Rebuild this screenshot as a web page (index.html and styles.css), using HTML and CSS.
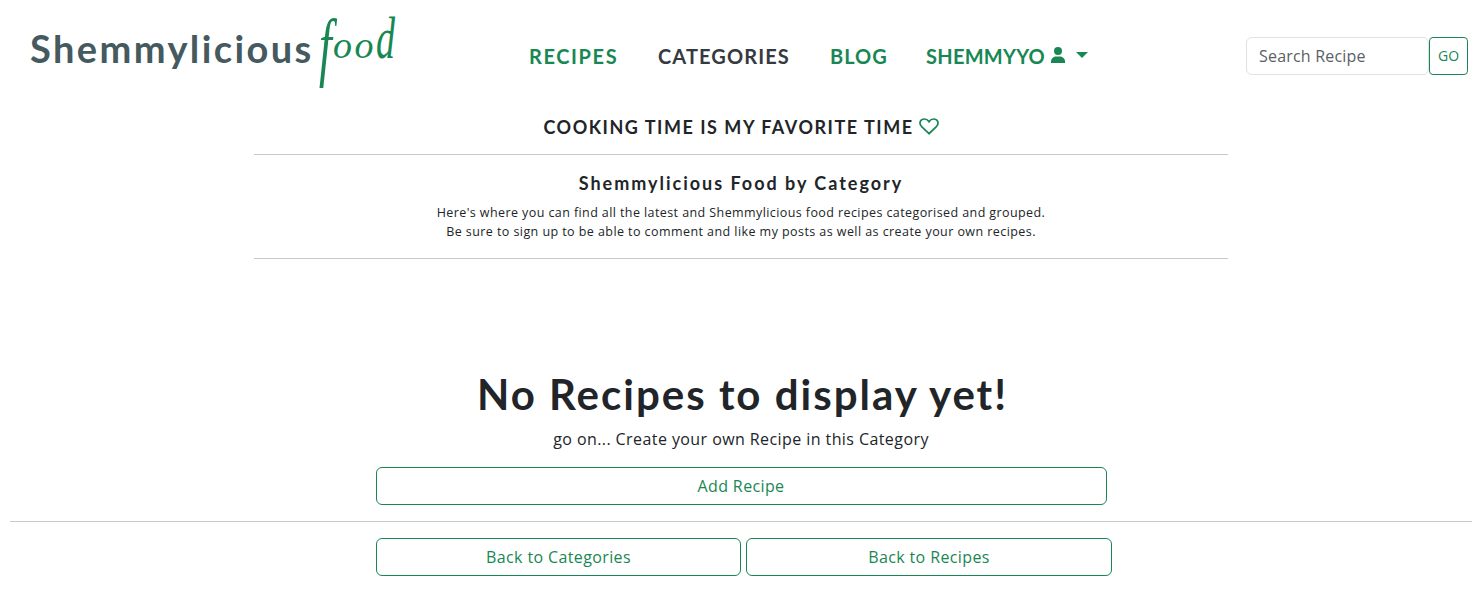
FILE: index.html
```html
<!DOCTYPE html>
<html lang="en">
<head>
<meta charset="utf-8">
<title>Shemmylicious Food</title>
<link rel="stylesheet" href="styles.css">
</head>
<body>
<header class="navbar">
  <a class="brand"><span class="brand-name">Shemmylicious</span><span class="brand-script"><span class="tall-f">f</span><span>oo</span><span class="tall-d">d</span></span></a>
  <nav class="links">
    <a class="recipes">RECIPES</a>
    <a class="categories">CATEGORIES</a>
    <a class="blog">BLOG</a>
    <a class="account"><span class="user">SHEMMYYO</span><svg class="person" viewBox="0 0 14 16"><circle cx="7" cy="4" r="4"/><path d="M0 16v-1.5C0 11.500 2.500 9.500 5.500 9.500h3c3 0 5.500 2 5.500 5V16z"/></svg><i class="caret"></i></a>
  </nav>
  <form class="search"><input type="text" placeholder="Search Recipe"><button type="button">GO</button></form>
</header>
<section class="intro">
  <h2 class="tagline"><span>COOKING TIME IS MY FAVORITE TIME</span><svg class="heart" viewBox="0 0 20 17"><path d="M10 15.700 2.400 8.300C-.6 4.800 1.600 1 5.300 1 7.500 1 9 2.200 10 3.700 11 2.200 12.500 1 14.700 1c3.700 0 5.900 3.800 2.900 7.300z"/></svg></h2>
  <div class="about">
    <h3>Shemmylicious Food by Category</h3>
    <p class="line-one">Here's where you can find all the latest and Shemmylicious food recipes categorised and grouped.</p>
    <p class="line-two">Be sure to sign up to be able to comment and like my posts as well as create your own recipes.</p>
  </div>
</section>
<main>
  <div class="empty">
    <h1>No Recipes to display yet!</h1>
    <p>go on... Create your own Recipe in this Category</p>
    <a class="button add">Add Recipe</a>
  </div>
  <hr>
  <div class="back"><a class="button to-categories">Back to Categories</a><a class="button to-recipes">Back to Recipes</a></div>
</main>
</body>
</html>
```
FILE: styles.css
```css
* { box-sizing: border-box; }
body { margin: 0; background: #fff; color: #212529; font: 16px/24px "Open Sans", sans-serif; white-space: nowrap; }
h1, h2, h3, p { margin: 0; }
.navbar { height: 112px; display: flex; align-items: flex-start; padding: 0 14px 0 30px; }
.brand { display: flex; width: 499px; height: 112px; color: #455a5f; }
.brand-name { width: 289px; padding-top: 24px; font: 700 38px/48px Lato, sans-serif; letter-spacing: 2.4px; }
.brand-script { display: flex; align-items: baseline; height: 76px; padding-top: 2px; color: #198754; font: italic 400 38px/60px "Liberation Serif", cursive; letter-spacing: 2.5px; }
.tall-f { width: 14px; font-size: 77px; line-height: 60px; letter-spacing: 0; transform: translateY(14px) scaleX(.6); transform-origin: 0 0; }
.tall-d { transform: scaleY(1.55); transform-origin: 50% 72%; }
.links { display: flex; flex: 1; padding-top: 41px; font: 700 20px/30px Lato, sans-serif; letter-spacing: 1px; color: #198754; }
.recipes { width: 129px; letter-spacing: 1.6px; }
.categories { width: 172px; color: #343a40; letter-spacing: 1.1px; }
.blog { width: 96px; }
.account { display: flex; align-items: center; }
.user { width: 119px; letter-spacing: .25px; }
.person { width: 14px; height: 16px; margin: -2px 11px 0 6px; fill: #198754; }
.caret { border: 6px solid transparent; border-top-color: #198754; border-bottom: 0; margin-top: -3px; }
.search { display: flex; padding-top: 37px; }
.search input { width: 183px; height: 38px; padding: 6px 12px; border: 1px solid #dee2e6; border-radius: 6px; font: 16px "Open Sans", sans-serif; letter-spacing: .2px; color: #5b6065; }
.search input::placeholder { color: #5b6065; opacity: 1; }
.search button { width: 39px; height: 38px; padding: 0 0 2px; border: 1px solid #198754; border-radius: 4px; background: #fff; color: #198754; font: 14px/21px "Open Sans", sans-serif; }
.intro { width: 974px; margin: 0 auto; text-align: center; }
.tagline { display: flex; justify-content: center; align-items: center; gap: 5px; height: 42px; padding-bottom: 13px; font: 700 18px/28px Lato, sans-serif; letter-spacing: 1.52px; }
.heart { width: 20px; height: 17px; fill: none; stroke: #198754; stroke-width: 1.7; }
.about { height: 105px; padding-top: 16px; border-top: 1px solid #c8c9ca; border-bottom: 1px solid #c8c9ca; }
.about h3 { height: 32px; font: 700 18px/24px Lato, sans-serif; letter-spacing: 1.98px; }
.about p { font-size: 12.5px; line-height: 19px; letter-spacing: .41px; }
.about .line-two { letter-spacing: .43px; }
main { padding: 109px 10px 0; }
.empty { width: 731px; margin: 0 auto; text-align: center; }
.empty h1 { height: 59px; padding: 1px 0 0 3px; font: 700 42px/50px Lato, sans-serif; letter-spacing: 2px; }
.empty p { height: 40px; line-height: 24px; letter-spacing: .42px; }
.button { display: block; height: 38px; padding: 6px 12px; border: 1px solid #198754; border-radius: 6px; color: #198754; letter-spacing: .38px; text-align: center; }
hr { height: 1px; margin: 16px 0; border: 0; background: #c8c9ca; }
.back { display: grid; grid-template-columns: 365px 366px; gap: 5px; margin-left: 366px; }
```
